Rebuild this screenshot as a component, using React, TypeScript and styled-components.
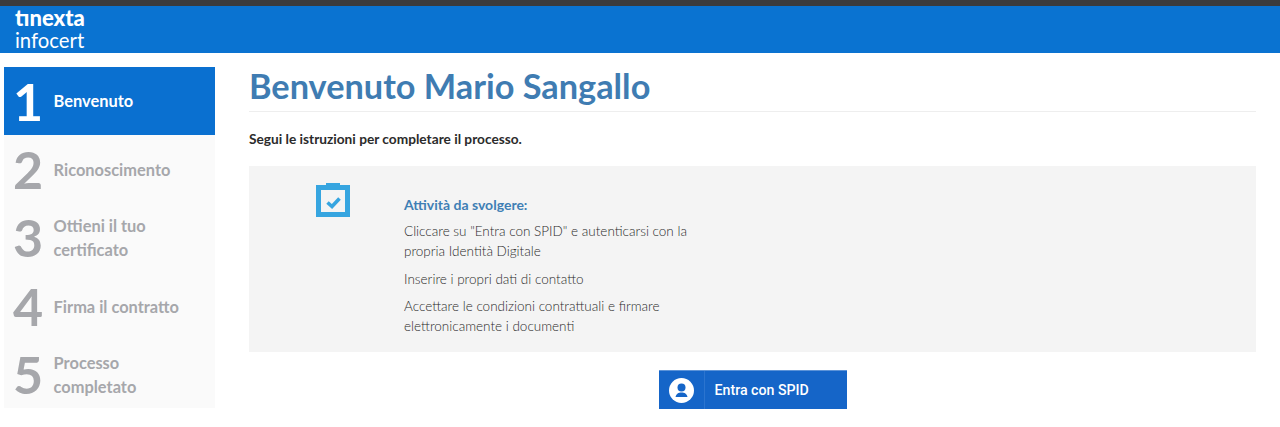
import React from "react";
import styled, { createGlobalStyle } from "styled-components";

const steps = [
  { num: 1, label: "Benvenuto" },
  { num: 2, label: "Riconoscimento" },
  { num: 3, label: "Ottieni il tuo certificato" },
  { num: 4, label: "Firma il contratto" },
  { num: 5, label: "Processo completato" },
];

export default function App() {
  return (
    <>
      <GlobalStyle />
      <Header>
        <Logo>
          <LogoTop>tınexta</LogoTop>
          <LogoBottom>infocert</LogoBottom>
        </Logo>
      </Header>
      <Page>
        <Sidebar>
          {steps.map((s) => (
            <Step key={s.num} $active={s.num === 1}>
              <StepNumber>{s.num}</StepNumber>
              <StepLabel $active={s.num === 1}>{s.label}</StepLabel>
            </Step>
          ))}
        </Sidebar>
        <Main>
          <Title>Benvenuto Mario Sangallo</Title>
          <Intro>Segui le istruzioni per completare il processo.</Intro>
          <Panel>
            <IconCol>
              <svg width="34" height="34" viewBox="0 0 34 34">
                <path
                  fill="#36a5e0"
                  fillRule="evenodd"
                  d="M10 0h14v2h10v32H0V2h10zM5 7v22h24V7z"
                />
                <path
                  fill="none"
                  stroke="#36a5e0"
                  strokeWidth="3.6"
                  d="M11.5 19.5l4.5 4L23.5 15.5"
                />
              </svg>
            </IconCol>
            <Tasks>
              <TasksTitle>Attività da svolgere:</TasksTitle>
              <Task>Cliccare su "Entra con SPID" e autenticarsi con la propria Identità Digitale</Task>
              <Task>Inserire i propri dati di contatto</Task>
              <Task>Accettare le condizioni contrattuali e firmare elettronicamente i documenti</Task>
            </Tasks>
          </Panel>
          <ButtonRow>
            <SpidButton>
              <SpidIcon>
                <svg width="25" height="25" viewBox="0 0 25 25">
                  <circle cx="12.5" cy="12.5" r="12.5" fill="#fff" />
                  <circle cx="12.5" cy="9.5" r="4" fill="#1565c8" />
                  <path d="M6.5 19c.6-3.4 3-4.6 6-4.6s5.4 1.2 6 4.6z" fill="#1565c8" />
                </svg>
              </SpidIcon>
              <SpidText>Entra con SPID</SpidText>
            </SpidButton>
          </ButtonRow>
        </Main>
      </Page>
    </>
  );
}

const GlobalStyle = createGlobalStyle`
  * {
    box-sizing: border-box;
  }
  body, html {
    margin: 0;
    padding: 0;
    background: #fff;
    font-family: Lato, "Open Sans", sans-serif;
  }
`;

const Header = styled.header`
  height: 53px;
  background-color: #0a73d1;
  border-top: 6px solid #3b3b3d;
  padding-left: 15px;
`;

const Logo = styled.div`
  display: flex;
  flex-direction: column;
  color: #fff;
`;

const LogoTop = styled.span`
  margin-top: 2px;
  font-size: 22px;
  font-weight: 900;
  line-height: 20px;
`;

const LogoBottom = styled.span`
  margin-top: 1px;
  font-size: 20.3px;
  font-weight: 400;
  line-height: 22px;
`;

const Page = styled.div`
  display: flex;
  align-items: flex-start;
  padding: 14px 24px 0 4px;
  gap: 34px;
`;

const Sidebar = styled.nav`
  width: 211px;
  flex: none;
  background-color: #fafafa;
`;

const Step = styled.div<{ $active?: boolean }>`
  height: 68.2px;
  display: flex;
  align-items: center;
  background-color: ${({ $active }) => ($active ? "#0a70d0" : "transparent")};
  color: ${({ $active }) => ($active ? "#fff" : "#a6a7ab")};
`;

const StepNumber = styled.span`
  width: 48px;
  flex: none;
  text-align: center;
  font-size: 52px;
  font-weight: 700;
  line-height: 1;
`;

const StepLabel = styled.span<{ $active?: boolean }>`
  margin: ${({ $active }) => ($active ? "0" : "2px")} 0 0 1.6px;
  font-size: 16.4px;
  font-weight: 700;
  line-height: 24px;
  max-width: 135px;
`;

const Main = styled.main`
  flex: 1;
  min-width: 0;
`;

const Title = styled.h1`
  margin: 0;
  height: 45px;
  border-bottom: 1px solid #eeeeee;
  color: #3f7cb2;
  font-size: 34.3px;
  font-weight: 700;
  line-height: 37px;
`;

const Intro = styled.p`
  margin: 18px 0 0;
  color: #2b2b2b;
  font-size: 13.7px;
  font-weight: 700;
  line-height: 17px;
`;

const Panel = styled.section`
  margin-top: 19px;
  height: 186px;
  background-color: #f4f4f4;
  display: flex;
`;

const IconCol = styled.div`
  width: 155px;
  flex: none;
  padding: 17px 0 0 67px;
`;

const Tasks = styled.div`
  width: 290px;
  padding-top: 29px;
`;

const TasksTitle = styled.h3`
  margin: 0 0 6px;
  color: #3f7fb5;
  font-size: 14px;
  font-weight: 700;
  line-height: 20px;
`;

const Task = styled.p`
  margin: 0 0 7.5px;
  color: #2b2b2b;
  font-size: 13.5px;
  font-weight: 300;
  line-height: 20px;
`;

const ButtonRow = styled.div`
  margin-top: 18px;
  display: flex;
  justify-content: center;
`;

const SpidButton = styled.button`
  width: 188px;
  height: 39px;
  padding: 0;
  border: none;
  border-top: 1px solid #5c93d8;
  background-color: #1565c8;
  color: #fff;
  display: flex;
  align-items: center;
  font-family: Roboto, "Open Sans", sans-serif;
`;

const SpidIcon = styled.span`
  width: 46px;
  height: 100%;
  flex: none;
  display: flex;
  align-items: center;
  justify-content: center;
  border-right: 1px solid #2b74cf;
`;

const SpidText = styled.span`
  margin-left: 10px;
  font-size: 14.2px;
  font-weight: 500;
`;
